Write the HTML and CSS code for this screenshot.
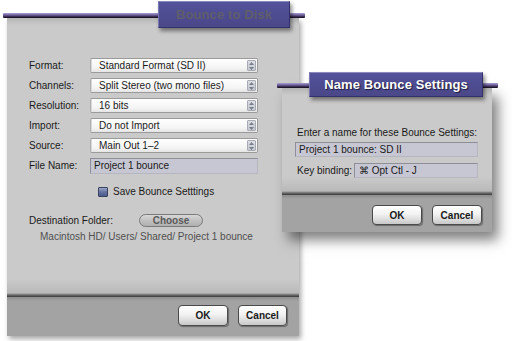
FILE: index.html
```html
<!DOCTYPE html>
<html>
<head>
<meta charset="utf-8">
<link rel="stylesheet" href="styles.css">
</head>
<body>
<div class="desk">
  <div class="win win-main">
    <div class="bar"></div>
    <div class="tab tab-main"><span>Bounce to Disk</span></div>
    <div class="body">
      <div class="content main-content">
        <div class="form">
          <div class="row"><span class="lbl">Format:</span><div class="popup"><span>Standard Format (SD II)</span><i class="step"><svg width="7" height="10" viewBox="0 0 7 10"><path d="M3.5 1 L6 4 H1 Z M3.5 9 L6 6 H1 Z" fill="#7a7f8c"/></svg></i></div></div>
          <div class="row"><span class="lbl">Channels:</span><div class="popup"><span>Split Stereo (two mono files)</span><i class="step"><svg width="7" height="10" viewBox="0 0 7 10"><path d="M3.5 1 L6 4 H1 Z M3.5 9 L6 6 H1 Z" fill="#7a7f8c"/></svg></i></div></div>
          <div class="row"><span class="lbl">Resolution:</span><div class="popup"><span>16 bits</span><i class="step"><svg width="7" height="10" viewBox="0 0 7 10"><path d="M3.5 1 L6 4 H1 Z M3.5 9 L6 6 H1 Z" fill="#7a7f8c"/></svg></i></div></div>
          <div class="row"><span class="lbl">Import:</span><div class="popup"><span>Do not Import</span><i class="step"><svg width="7" height="10" viewBox="0 0 7 10"><path d="M3.5 1 L6 4 H1 Z M3.5 9 L6 6 H1 Z" fill="#7a7f8c"/></svg></i></div></div>
          <div class="row"><span class="lbl">Source:</span><div class="popup"><span>Main Out 1–2</span><i class="step"><svg width="7" height="10" viewBox="0 0 7 10"><path d="M3.5 1 L6 4 H1 Z M3.5 9 L6 6 H1 Z" fill="#7a7f8c"/></svg></i></div></div>
          <div class="row"><span class="lbl">File Name:</span><div class="field field-main">Project 1 bounce</div></div>
        </div>
        <div class="check"><span class="box"></span><span>Save Bounce Setttings</span></div>
        <div class="dest"><span class="dest-lbl">Destination Folder:</span><span class="choose">Choose</span></div>
        <div class="path">Macintosh HD/ Users/ Shared/ Project 1 bounce</div>
      </div>
      <div class="foot foot-main">
        <span class="btn btn-ok">OK</span>
        <span class="btn">Cancel</span>
      </div>
    </div>
  </div>

  <div class="win win-name">
    <div class="bar"></div>
    <div class="tab tab-name"><span>Name Bounce Settings</span></div>
    <div class="body">
      <div class="content name-content">
        <div class="prompt">Enter a name for these Bounce Settings:</div>
        <div class="field field-name">Project 1 bounce: SD II</div>
        <div class="keyrow"><span class="klbl">Key binding:</span><div class="field field-key">⌘ Opt Ctl - J</div></div>
      </div>
      <div class="foot foot-name">
        <span class="btn btn-ok">OK</span>
        <span class="btn">Cancel</span>
      </div>
    </div>
  </div>
</div>
</body>
</html>
```

FILE: styles.css
```css
html, body {
  margin: 0;
  padding: 0;
  background: #ffffff;
}
body {
  width: 512px;
  height: 341px;
  overflow: hidden;
  font-family: "Liberation Sans", Arial, sans-serif;
  font-size: 10px;
  color: #1a1a1a;
}
.desk {
  position: relative;
  width: 512px;
  height: 341px;
}
.win {
  position: absolute;
  display: flex;
  flex-direction: column;
}
.win-main {
  left: 3px;
  top: 13px;
  width: 302px;
  height: 323px;
}
.win-name {
  left: 277px;
  top: 83px;
  width: 221px;
  height: 149px;
}
.bar {
  height: 5px;
  flex: none;
  background: linear-gradient(to bottom, #a9a2d2 0%, #6a5a96 45%, #2a2040 80%, #141018 100%);
  border-radius: 1px;
}
.body {
  flex: 1;
  display: flex;
  flex-direction: column;
  background: #cacaca;
  box-shadow: 2px 3px 5px rgba(0,0,0,0.35);
}
.win-main .body {
  margin: 0 6px 0 4px;
}
.win-name .body {
  margin: 0 6px 0 5px;
  box-shadow: 6px 8px 12px rgba(0,0,0,0.5);
}
.tab {
  position: absolute;
  display: flex;
  align-items: center;
  justify-content: center;
  box-sizing: border-box;
  background: linear-gradient(to bottom, #53519a 0%, #4a4888 100%);
  border: 1px solid #33316a;
  border-top-color: #8a88bc;
  border-left-color: #7a78b0;
  box-shadow: 2px 3px 4px rgba(0,0,0,0.45);
  font-weight: bold;
  font-size: 13px;
  letter-spacing: 0.1px;
}
.tab-main {
  left: 155px;
  top: -12px;
  width: 132px;
  height: 27px;
  color: #5e5e6c;
}
.tab-name {
  left: 32px;
  top: -11px;
  width: 174px;
  height: 25px;
  color: #ffffff;
  text-shadow: 1px 1px 1px #1c1a3a;
}
.content {
  flex: 1;
  display: flex;
  flex-direction: column;
  background: linear-gradient(to bottom, #b4b4b4 0px, #cacaca 7px, #cacaca calc(100% - 18px), #b9b9b9 calc(100% - 4px), #6a6a6a calc(100% - 2px), #3a3a3a 100%);
}
.main-content {
  padding: 40px 0 0 22px;
}
.form {
  display: flex;
  flex-direction: column;
  gap: 5px;
}
.row {
  display: flex;
  align-items: center;
  height: 15px;
}
.lbl {
  width: 61px;
  flex: none;
}
.popup {
  width: 168px;
  height: 15px;
  box-sizing: border-box;
  display: flex;
  align-items: center;
  justify-content: space-between;
  padding: 0 1px 0 8px;
  background: linear-gradient(to bottom, #ffffff 0%, #f4f4f4 70%, #e4e4e4 100%);
  border: 1px solid #9a9a9a;
  border-left-color: #b0b0b0;
  border-radius: 2px;
  box-shadow: inset 1px 0 0 #d8d8d8;
}
.step {
  display: flex;
  align-items: center;
  justify-content: center;
  width: 9px;
  height: 11px;
  background: linear-gradient(to bottom, #dcdee4, #c4c7cf);
  border: 1px solid #a8abb4;
  border-radius: 1px;
  box-sizing: border-box;
}
.field {
  box-sizing: border-box;
  height: 15px;
  display: flex;
  align-items: center;
  padding-left: 3px;
  background: #c7c7d3;
  border: 1px solid #8e8e98;
  border-bottom-color: #b6b6c0;
  border-right-color: #b6b6c0;
}
.field-main {
  width: 168px;
  height: 16px;
}
.check {
  display: flex;
  align-items: center;
  margin: 13px 0 0 69px;
  height: 11px;
  gap: 5px;
}
.box {
  width: 10px;
  height: 10px;
  box-sizing: border-box;
  border: 1px solid #3a4260;
  background: linear-gradient(to bottom, #9aa6c8 0%, #6472a0 50%, #4c5a8c 100%);
  border-radius: 1px;
}
.dest {
  display: flex;
  align-items: center;
  margin-top: 17px;
  height: 13px;
}
.dest-lbl {
  width: 110px;
  flex: none;
}
.choose {
  width: 64px;
  height: 13px;
  box-sizing: border-box;
  display: flex;
  align-items: center;
  justify-content: center;
  border: 1px solid #7a7a7a;
  border-radius: 7px;
  background: linear-gradient(to bottom, #d8d8d8 0%, #c0c0c0 50%, #b0b0b0 100%);
  color: #5a5a5a;
  font-weight: bold;
}
.path {
  margin: 4px 0 0 11px;
  color: #505050;
  line-height: 12px;
}
.foot {
  flex: none;
  display: flex;
  justify-content: flex-end;
  align-items: flex-start;
  gap: 10px;
  background: linear-gradient(to bottom, #8c8c8c 0px, #a3a3a3 4px, #a3a3a3 100%);
}
.foot-main {
  height: 39px;
  box-sizing: border-box;
  padding: 8px 12px 0 0;
}
.btn {
  box-sizing: border-box;
  display: flex;
  align-items: center;
  justify-content: center;
  width: 49px;
  height: 21px;
  border: 1px solid #4a4a4a;
  border-radius: 4px;
  background: linear-gradient(to bottom, #ffffff 0%, #f2f2f2 45%, #dcdcdc 75%, #c8c8c8 100%);
  box-shadow: 1px 1px 1px rgba(0,0,0,0.35);
  font-weight: bold;
  font-size: 10px;
  color: #1a1a1a;
}
.btn-ok {
  width: 50px;
}
.name-content {
  padding: 39px 0 0 13px;
}
.prompt {
  line-height: 12px;
  padding-left: 2px;
}
.field-name {
  width: 183px;
  margin-top: 3px;
}
.keyrow {
  display: flex;
  align-items: center;
  margin-top: 6px;
  height: 15px;
}
.klbl {
  width: 59px;
  flex: none;
  padding-left: 2px;
  box-sizing: border-box;
}
.field-key {
  width: 124px;
  padding-left: 4px;
}
.foot-name {
  height: 37px;
  box-sizing: border-box;
  padding: 10px 10px 0 0;
}
.foot-name .btn {
  height: 20px;
  width: 50px;
}
```
